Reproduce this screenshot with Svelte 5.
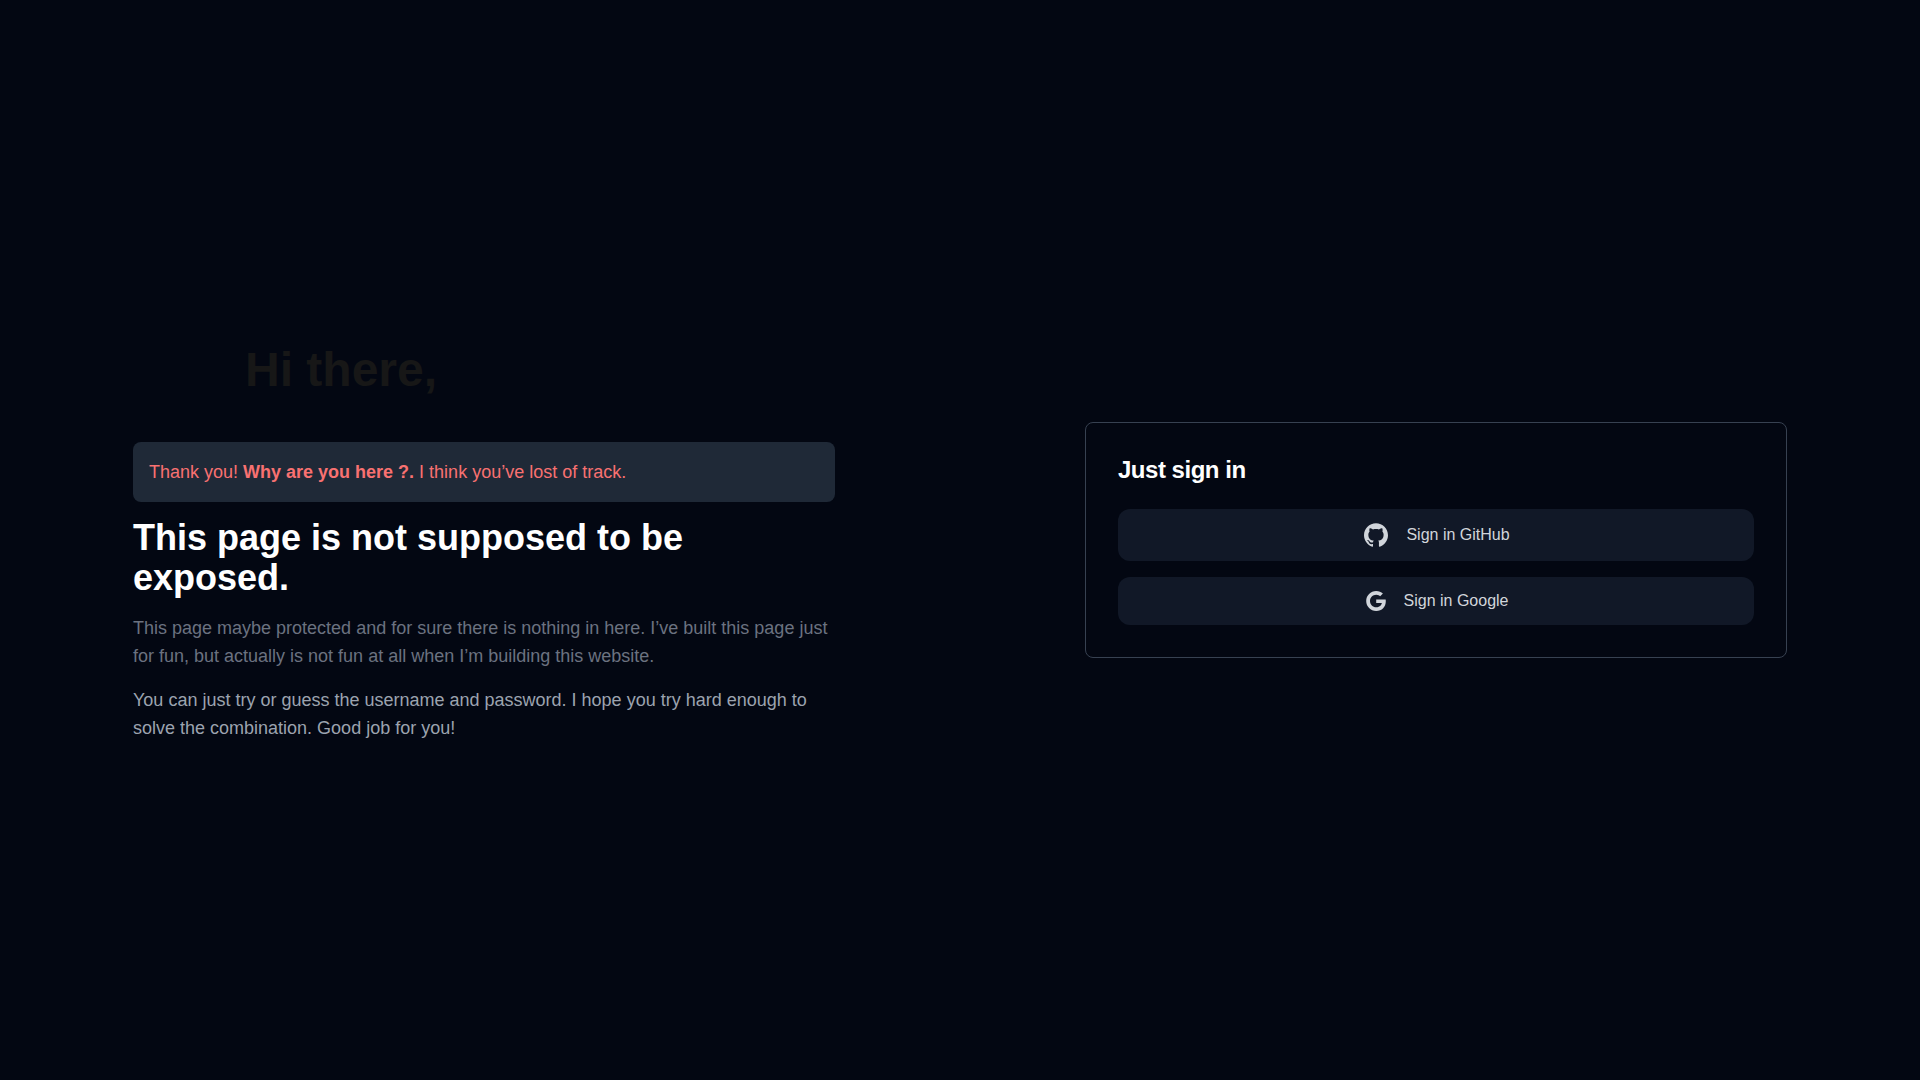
<script lang="ts">
  interface Provider {
    name: string;
    viewBox: string;
    size: number;
    path: string;
  }

  const providers: Provider[] = [
    {
      name: 'GitHub',
      viewBox: '0 0 24 24',
      size: 24,
      path: 'M12 .297c-6.63 0-12 5.373-12 12 0 5.303 3.438 9.8 8.205 11.385.6.113.82-.258.82-.577 0-.285-.01-1.04-.015-2.04-3.338.724-4.042-1.61-4.042-1.61C4.422 18.07 3.633 17.7 3.633 17.7c-1.087-.744.084-.729.084-.729 1.205.084 1.838 1.236 1.838 1.236 1.07 1.835 2.809 1.305 3.495.998.108-.776.417-1.305.76-1.605-2.665-.3-5.466-1.332-5.466-5.93 0-1.31.465-2.38 1.235-3.22-.135-.303-.54-1.523.105-3.176 0 0 1.005-.322 3.3 1.23.96-.267 1.98-.399 3-.405 1.02.006 2.04.138 3 .405 2.28-1.552 3.285-1.23 3.285-1.23.645 1.653.24 2.873.12 3.176.765.84 1.23 1.91 1.23 3.22 0 4.61-2.805 5.625-5.475 5.92.42.36.81 1.096.81 2.22 0 1.606-.015 2.896-.015 3.286 0 .315.21.69.825.57C20.565 22.092 24 17.592 24 12.297c0-6.627-5.373-12-12-12'
    },
    {
      name: 'Google',
      viewBox: '0 0 24 24',
      size: 20,
      path: 'M12.24 10.285V14.4h6.806c-.275 1.765-2.056 5.174-6.806 5.174-4.095 0-7.439-3.389-7.439-7.574s3.345-7.574 7.439-7.574c2.33 0 3.891.989 4.785 1.849l3.254-3.138C18.189 1.186 15.479 0 12.24 0c-6.635 0-12 5.365-12 12s5.365 12 12 12c6.926 0 11.52-4.869 11.52-11.726 0-.788-.085-1.39-.189-1.989H12.24z'
    }
  ];
</script>

<svelte:head>
  <title>Sign in</title>
</svelte:head>

<main class="page">
  <section class="intro">
    <h2 class="greeting">Hi there,</h2>
    <p class="alert" role="alert">
      Thank you! <strong>Why are you here ?.</strong> I think you’ve lost of track.
    </p>
    <h1>This page is not supposed to be exposed.</h1>
    <p class="muted">
      This page maybe protected and for sure there is nothing in here. I’ve built this page just for
      fun, but actually is not fun at all when I’m building this website.
    </p>
    <p>
      You can just try or guess the username and password. I hope you try hard enough to solve the
      combination. Good job for you!
    </p>
  </section>

  <section class="login">
    <div class="card">
      <h2>Just sign in</h2>
      <div class="providers">
        {#each providers as provider (provider.name)}
          <button type="button">
            <svg
              width={provider.size}
              height={provider.size}
              viewBox={provider.viewBox}
              fill="currentColor"
              aria-hidden="true"
            >
              <path d={provider.path} />
            </svg>
            <span>Sign in {provider.name}</span>
          </button>
        {/each}
      </div>
    </div>
  </section>
</main>

<style>
  :global(body) {
    background: #030712;
  }

  .page {
    display: grid;
    grid-template-columns: 1fr 1fr;
    align-items: center;
    box-sizing: border-box;
    min-height: 100vh;
    padding: 0 8px;
    color: #9ca3af;
    font-family: 'Liberation Sans', Arial, sans-serif;
    font-size: 18px;
    line-height: 28px;
  }

  h1,
  h2,
  p {
    margin: 0;
  }

  /* Left column */
  .intro,
  .login {
    padding: 0 125px;
  }

  .intro {
    display: flex;
    flex-direction: column;
    gap: 16px;
  }

  .greeting {
    padding: 8px 112px 32px;
    color: #171717;
    font-size: 48px;
    line-height: 48px;
  }

  .alert {
    padding: 16px;
    border-radius: 8px;
    background: #1f2937;
    color: #f87171;
  }

  h1 {
    color: #fff;
    font-size: 36px;
    line-height: 40px;
  }

  .muted {
    color: #6b7280;
  }

  /* Sign in card */
  .card {
    padding: 32px;
    border: 1px solid #374151;
    border-radius: 8px;
  }

  .card h2 {
    margin-bottom: 24px;
    color: #fff;
    font-size: 24px;
    line-height: 30px;
    letter-spacing: -0.02em;
  }

  .providers {
    display: flex;
    flex-direction: column;
    gap: 16px;
  }

  button {
    display: flex;
    align-items: center;
    justify-content: center;
    gap: 18px;
    width: 100%;
    padding: 14px 14px 14px 16px;
    border: 0;
    border-radius: 12px;
    background: #111827;
    color: #d1d5db;
    font-family: inherit;
    font-size: 16px;
    line-height: 20px;
    cursor: pointer;
  }

  button:hover {
    background: #1f2937;
  }
</style>
